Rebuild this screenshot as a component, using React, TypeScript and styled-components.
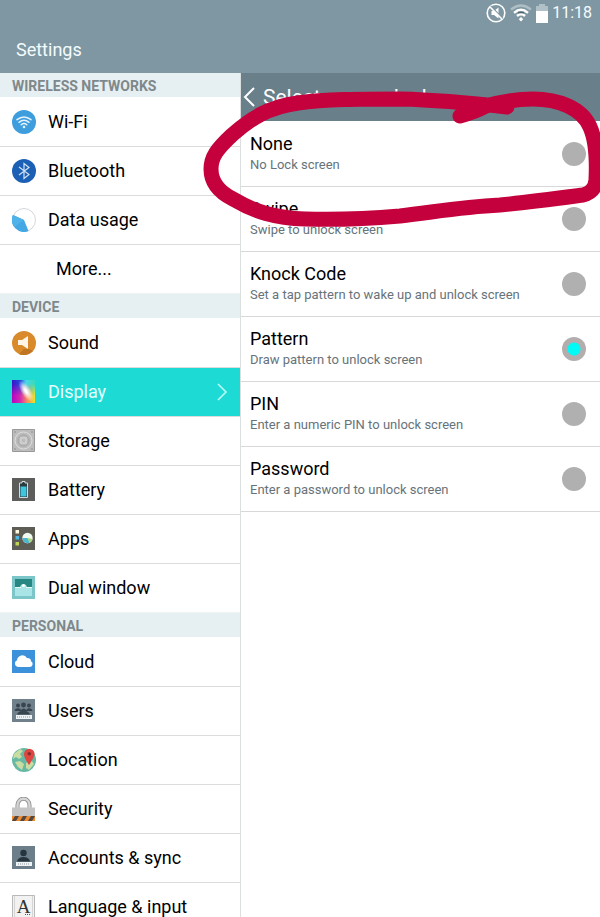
import React from "react";
import styled, { createGlobalStyle, css } from "styled-components";

const GlobalStyle = createGlobalStyle`
  *, *::before, *::after { box-sizing: border-box; }
  body { margin: 0; background: #fff; }
  body, button, input { font-family: Roboto, "Liberation Sans", sans-serif; }
`;

const Page = styled.div`
  position: relative;
  display: flex;
  flex-direction: column;
  height: 100vh;
  overflow: hidden;
  color: #000;
`;

const TopBar = styled.header`
  flex: none;
  background: #7f97a2;
  color: #f4fbfd;
`;

const StatusBar = styled.div`
  display: flex;
  align-items: center;
  justify-content: flex-end;
  height: 26px;
  padding-right: 8px;
  gap: 4px;
`;

const Clock = styled.time`
  font-size: 16px;
  line-height: 24px;
`;

const AppTitle = styled.h1`
  margin: 0;
  padding: 0 16px;
  height: 47px;
  font-size: 18px;
  line-height: 47px;
  font-weight: 400;
`;

const Columns = styled.div`
  display: flex;
  flex: 1;
  min-height: 0;
`;

const Sidebar = styled.nav`
  width: 40%;
  flex: none;
  overflow: hidden;
`;

const SectionTitle = styled.h2`
  margin: 0 0 1px;
  padding: 2px 12px 0;
  background: #e6eff1;
  color: #7e888b;
  font-size: 14px;
  line-height: 22px;
  font-weight: 700;
`;

const List = styled.ul`
  margin: 0;
  padding: 0;
  list-style: none;
`;

const NavRow = styled.button<{ $selected?: boolean; $indent?: boolean; $last?: boolean }>`
  display: flex;
  align-items: center;
  gap: 12px;
  width: 100%;
  height: 49px;
  padding: 0 12px;
  border: 0;
  border-bottom: 1px solid ${(p) => (p.$last ? "#eef3f4" : "#dcdcdc")};
  background: #fff;
  color: #000;
  font-size: 18px;
  line-height: 24px;
  text-align: left;
  ${(p) => p.$indent && css`padding-left: 56px;`}
  ${(p) => p.$selected && css`background: #1edad5; color: #e4fffd;`}
`;

const NavLabel = styled.span`
  flex: 1;
  white-space: nowrap;
`;

const Panel = styled.main`
  flex: 1;
  min-width: 0;
  border-left: 1px solid #dcdfe0;
`;

const PanelHeader = styled.div`
  display: flex;
  align-items: center;
  height: 48px;
  margin-bottom: 1px;
  padding-left: 2px;
  gap: 8px;
  background: #69808b;
  color: #fff;
`;

const BackButton = styled.button`
  display: flex;
  padding: 0;
  border: 0;
  background: none;
  color: inherit;
`;

const PanelTitle = styled.h2`
  margin: 0;
  font-size: 21px;
  line-height: 24px;
  font-weight: 400;
`;

const Option = styled.label`
  display: flex;
  align-items: center;
  justify-content: space-between;
  height: 65px;
  padding: 0 14px 0 9px;
  border-bottom: 1px solid #d8d8d8;
`;

const OptionText = styled.span`
  display: flex;
  flex-direction: column;
`;

const OptionName = styled.span`
  font-size: 18px;
  line-height: 22px;
`;

const OptionHint = styled.span`
  color: #66737a;
  font-size: 13px;
  line-height: 20px;
`;

const Radio = styled.input`
  appearance: none;
  flex: none;
  width: 24px;
  height: 24px;
  margin: 0;
  border-radius: 50%;
  background: #b0b0b0;
  &:checked {
    background: radial-gradient(circle, #00fbf6 6px, #b3adae 7px);
  }
`;

const Marker = styled.svg`
  position: absolute;
  top: 0;
  left: 0;
  width: 100%;
  pointer-events: none;
`;

const Icon = ({ children }: { children: React.ReactNode }) => (
  <svg width="24" height="24" viewBox="0 0 24 24" aria-hidden="true">
    {children}
  </svg>
);

const icons: Record<string, React.ReactNode> = {
  wifi: (
    <Icon>
      <circle cx="12" cy="12" r="12" fill="#3d9ddd" />
      <g fill="none" stroke="#e4f4fd" strokeWidth="1.5" strokeLinecap="round">
        <path d="M5 9.7Q12 4.2 19 9.7M7 12.3Q12 8.2 17 12.3M9.2 14.8Q12 12.3 14.8 14.8" />
      </g>
      <circle cx="12" cy="17" r="1.3" fill="#e4f4fd" />
    </Icon>
  ),
  bluetooth: (
    <Icon>
      <circle cx="12" cy="12" r="12" fill="#1c60b5" />
      <path d="M7 8L17 15.5L12 19.5V4.5L17 8.5L7 16" fill="none" stroke="#cfe1f5" strokeWidth="1.2" />
    </Icon>
  ),
  data: (
    <Icon>
      <circle cx="12" cy="12" r="11.5" fill="#fff" stroke="#d3d8dc" />
      <path d="M1 7L12 12L16.5 23A12 12 0 0 1 1 7Z" fill="#43a8e3" />
      <path d="M1 7A12 12 0 0 0 2.5 19L12 12Z" fill="#4fb2e9" />
    </Icon>
  ),
  sound: (
    <Icon>
      <circle cx="12" cy="12" r="12" fill="#d98a2b" />
      <path d="M12 18L17 18L21 20A12 12 0 0 1 7 23Z" fill="#c07522" />
      <path d="M6 9H10L16 5V18L10 14H6Z" fill="#fff6e8" />
    </Icon>
  ),
  display: (
    <Icon>
      <defs>
        <linearGradient id="hue" x1="0" y1="0" x2="1" y2="0">
          <stop offset="0" stopColor="#3b12c7" />
          <stop offset=".38" stopColor="#264bdc" />
          <stop offset=".6" stopColor="#48d8e8" />
          <stop offset="1" stopColor="#37dbb9" />
        </linearGradient>
        <linearGradient id="warm" x1="0" y1="0" x2="1" y2="0">
          <stop offset="0" stopColor="#b705c0" />
          <stop offset=".35" stopColor="#d327b5" />
          <stop offset=".65" stopColor="#f58b60" />
          <stop offset="1" stopColor="#e8e522" />
        </linearGradient>
        <linearGradient id="fade" x1="0" y1="0" x2="0" y2="1">
          <stop offset=".15" stopColor="#fff" stopOpacity="0" />
          <stop offset=".65" stopColor="#fff" />
        </linearGradient>
        <mask id="lower"><rect width="24" height="24" fill="url(#fade)" /></mask>
        <radialGradient id="glow">
          <stop offset=".15" stopColor="#fff" />
          <stop offset="1" stopColor="#fff" stopOpacity="0" />
        </radialGradient>
      </defs>
      <path d="M0 0H23V23H0Z" fill="url(#hue)" />
      <path d="M0 0H23V23H0Z" fill="url(#warm)" mask="url(#lower)" />
      <ellipse cx="14" cy="11" rx="5" ry="12" transform="rotate(-32 14 11)" fill="url(#glow)" />
    </Icon>
  ),
  storage: (
    <Icon>
      <path d="M.5 .5H22.5V22.5H.5Z" fill="#bcbcbc" stroke="#989898" />
      <g fill="none" stroke="#dedede">
        <circle cx="11.5" cy="11.5" r="8.5" />
        <circle cx="11.5" cy="11.5" r="5.5" stroke="#a3a3a3" />
        <path d="M9 8V15M14 8V15M10 9H13M10 14H13" />
      </g>
      <path d="M2 2h2v2h-2zM19 2h2v2h-2zM2 19h2v2h-2zM19 19h2v2h-2z" fill="#a6a6a6" />
    </Icon>
  ),
  battery: (
    <Icon>
      <path d="M0 0H23V23H0Z" fill="#5d5d5b" />
      <path d="M7.5 5H10V3.5H13V5H15.5V19.5H7.5Z" fill="#263a40" stroke="#d3dcdd" />
      <path d="M8.5 8.5H14.5V18.5H8.5Z" fill="#40c5df" />
    </Icon>
  ),
  apps: (
    <Icon>
      <path d="M0 0H23V23H0Z" fill="#5d5d56" />
      <path d="M3.5 3H7V6.5H3.5Z" fill="#fff9de" />
      <path d="M3.5 9H7V12.5H3.5Z" fill="#4cb8e4" />
      <path d="M3.5 15H7V18.5H3.5Z" fill="#bfd450" />
      <circle cx="15.5" cy="11" r="5.2" fill="#f1faee" />
      <path d="M10.3 11L15.5 11L18 15.5A5.2 5.2 0 0 1 10.3 11Z" fill="#4eb7ce" />
      <path d="M15.5 11L20.6 12A5.2 5.2 0 0 1 17.5 15.8Z" fill="#a4d67c" />
    </Icon>
  ),
  dual: (
    <Icon>
      <path d="M0 0H23V23H0Z" fill="#7cc5c9" />
      <path d="M3 3H20V11H3Z" fill="#278783" />
      <path d="M3 11H8Q9 8 11.5 8T15 11H20V20H3Z" fill="#a9e4e6" />
      <path d="M3 11.5H9M14 11.5H20" stroke="#e3fafa" />
      <circle cx="11.5" cy="9.5" r="1.5" fill="#fff" />
    </Icon>
  ),
  cloud: (
    <Icon>
      <path d="M0 0H23V23H0Z" fill="#3b92da" />
      <path d="M6 17A3.5 3.5 0 0 1 5 10.3A5.4 5.4 0 0 1 15 8Q19 8 19 11.2A3.1 3.1 0 0 1 18 17Z" fill="#fff" />
    </Icon>
  ),
  users: (
    <Icon>
      <path d="M0 0H23V23H0Z" fill="#71818b" />
      <g fill="#38454e">
        <circle cx="6" cy="6.5" r="2" />
        <circle cx="11.5" cy="6" r="2.4" />
        <circle cx="17" cy="6.5" r="2" />
        <path d="M2.5 12Q3 9 6 9.2T9 11Q11.5 8 14.5 11Q15 9 17 9.2Q20 9 20.5 12Z" />
        <path d="M5 15.5Q6 12 11.5 11.5Q17 12 18 15.5Z" />
      </g>
      <path d="M4 16H20V20H4Z" fill="#f0f3f5" />
      <path d="M5 18H19" stroke="#8c999f" strokeDasharray="1 1" />
    </Icon>
  ),
  location: (
    <Icon>
      <circle cx="12" cy="12" r="12" fill="#68b9a4" />
      <path d="M2 6L8 1L11 3L8 6L10 9L7 11L4 9L1 11ZM3 14L8 13L12 16L10 22L6 19ZM14 15L19 12L22 16L17 22L14 20Z" fill="#c9dda3" />
      <path d="M17 17Q12 10 12 6A5.3 5.3 0 0 1 22.6 6Q22 10 17 17Z" fill="#df4640" />
      <circle cx="17.3" cy="5.8" r="1.8" fill="#872c2c" />
    </Icon>
  ),
  security: (
    <Icon>
      <path d="M5.5 12V8A6 6.3 0 0 1 17.5 8V12" fill="none" stroke="#8c8c8c" strokeWidth="4" />
      <path d="M5.5 12V8A6 6.3 0 0 1 17.5 8V12" fill="none" stroke="#d5d5d5" strokeWidth="2.4" />
      <path d="M0 10.5H23V19H0Z" fill="#c4c4c4" />
      <path d="M0 19H23V24H0Z" fill="#f08a31" />
      <path d="M0 24L3 19H7L4 24ZM8 24L11 19H15L12 24ZM16 24L19 19H23L20 24Z" fill="#514841" />
    </Icon>
  ),
  accounts: (
    <Icon>
      <path d="M0 0H23V23H0Z" fill="#6b7e8a" />
      <circle cx="11.5" cy="7" r="3.2" fill="#26343d" />
      <path d="M5 15.5Q6 11 11.5 11T18 15.5Z" fill="#26343d" />
      <path d="M4 16H20V20H4Z" fill="#eef3f5" />
      <path d="M6 18H18" stroke="#8e9ba2" strokeDasharray="1 1" />
    </Icon>
  ),
  language: (
    <Icon>
      <path d="M.5 .5H22.5V22.5H.5Z" fill="#f2f2f2" stroke="#b9b9b9" />
      <path d="M2.5 1V22M20.5 1V22" stroke="#d5d5d5" />
      <text x="11.5" y="17.5" textAnchor="middle" fontFamily="Liberation Serif, serif" fontSize="19" fill="#333">A</text>
      <path d="M13 19.5H19" stroke="#555" strokeDasharray="1 1" />
    </Icon>
  ),
};

type Item = { icon?: string; label: string };

const sections: { title: string; items: Item[] }[] = [
  {
    title: "WIRELESS NETWORKS",
    items: [
      { icon: "wifi", label: "Wi-Fi" },
      { icon: "bluetooth", label: "Bluetooth" },
      { icon: "data", label: "Data usage" },
      { label: "More..." },
    ],
  },
  {
    title: "DEVICE",
    items: [
      { icon: "sound", label: "Sound" },
      { icon: "display", label: "Display" },
      { icon: "storage", label: "Storage" },
      { icon: "battery", label: "Battery" },
      { icon: "apps", label: "Apps" },
      { icon: "dual", label: "Dual window" },
    ],
  },
  {
    title: "PERSONAL",
    items: [
      { icon: "cloud", label: "Cloud" },
      { icon: "users", label: "Users" },
      { icon: "location", label: "Location" },
      { icon: "security", label: "Security" },
      { icon: "accounts", label: "Accounts & sync" },
      { icon: "language", label: "Language & input" },
    ],
  },
];

const options = [
  { name: "None", hint: "No Lock screen" },
  { name: "Swipe", hint: "Swipe to unlock screen" },
  { name: "Knock Code", hint: "Set a tap pattern to wake up and unlock screen" },
  { name: "Pattern", hint: "Draw pattern to unlock screen" },
  { name: "PIN", hint: "Enter a numeric PIN to unlock screen" },
  { name: "Password", hint: "Enter a password to unlock screen" },
];

const StatusIcons = () => (
  <>
    <svg width="20" height="20" viewBox="0 0 20 20" fill="none" stroke="#fff" aria-label="Muted">
      <circle cx="10" cy="10" r="8.8" strokeWidth="1.6" />
      <path d="M5.5 8H8L12.5 4.5V15.5L8 12H5.5Z" fill="#fff" stroke="none" />
      <path d="M4.5 3L17 15.5" stroke="#7f97a2" strokeWidth="1.4" />
      <path d="M3.8 3.8L16.2 16.2" strokeWidth="1.6" />
    </svg>
    <svg width="22" height="18" viewBox="0 0 22 18" fill="none" aria-label="Wi-Fi">
      <path d="M1 5.5Q11-2.5 21 5.5" stroke="#aebec5" strokeWidth="2.4" />
      <path d="M4 8.8Q11 2.6 18 8.8" stroke="#fff" strokeWidth="2.4" />
      <path d="M7 12Q11 8.4 15 12" stroke="#fff" strokeWidth="2.4" />
      <path d="M8 8.5H14" stroke="#53656e" strokeWidth="1.6" />
      <path d="M11 13L13.2 15.2L11 17.6L8.8 15.2Z" fill="#fff" />
    </svg>
    <svg width="12" height="20" viewBox="0 0 12 20" aria-label="Battery">
      <path d="M3 1H9V3H12V9H0V3H3Z" fill="#b0c0c7" />
      <path d="M0 8H12V20H0Z" fill="#fff" />
    </svg>
  </>
);

export default function App() {
  return (
    <Page>
      <GlobalStyle />
      <TopBar>
        <StatusBar>
          <StatusIcons />
          <Clock>11:18</Clock>
        </StatusBar>
        <AppTitle>Settings</AppTitle>
      </TopBar>
      <Columns>
        <Sidebar>
          {sections.map((section) => (
            <section key={section.title}>
              <SectionTitle>{section.title}</SectionTitle>
              <List>
                {section.items.map(({ icon, label }, index) => {
                  const selected = label === "Display";
                  return (
                    <li key={label}>
                      <NavRow
                        $selected={selected}
                        $indent={!icon}
                        $last={index === section.items.length - 1}
                        aria-current={selected ? "page" : undefined}
                      >
                        {icon && icons[icon]}
                        <NavLabel>{label}</NavLabel>
                        {selected && (
                          <svg width="12" height="20" viewBox="0 0 12 20" fill="none" stroke="#b8fffb" strokeWidth="1.6" aria-hidden="true">
                            <path d="M2 2L10 10L2 18" />
                          </svg>
                        )}
                      </NavRow>
                    </li>
                  );
                })}
              </List>
            </section>
          ))}
        </Sidebar>
        <Panel>
          <PanelHeader>
            <BackButton aria-label="Back">
              <svg width="12" height="20" viewBox="0 0 12 20" fill="none" stroke="currentColor" strokeWidth="2">
                <path d="M11 1L2 10L11 19" />
              </svg>
            </BackButton>
            <PanelTitle>Select screen lock</PanelTitle>
          </PanelHeader>
          {options.map((o) => (
            <Option key={o.name}>
              <OptionText>
                <OptionName>{o.name}</OptionName>
                <OptionHint>{o.hint}</OptionHint>
              </OptionText>
              <Radio type="radio" name="lock" defaultChecked={o.name === "Pattern"} />
            </Option>
          ))}
        </Panel>
      </Columns>
      <Marker viewBox="0 0 600 917" fill="none" stroke="#c4003d" strokeWidth="15" strokeLinecap="round" strokeLinejoin="round" aria-hidden="true">
        <path d="M507 107C480 104 440 100 400 99C360 99 325 99 298 103C268 107 250 119 232 135C217 149 211 157 211 169C211 183 219 192 233 199C255 212 275 218 305 219C335 220 365 219 400 216C435 212 460 207 500 205C530 202 560 198 583 195Q595 192 596 180C597 158 596 140 590 127C582 108 558 99 533 99C515 99 500 102 486 106Q475 112 460 116" />
      </Marker>
    </Page>
  );
}
